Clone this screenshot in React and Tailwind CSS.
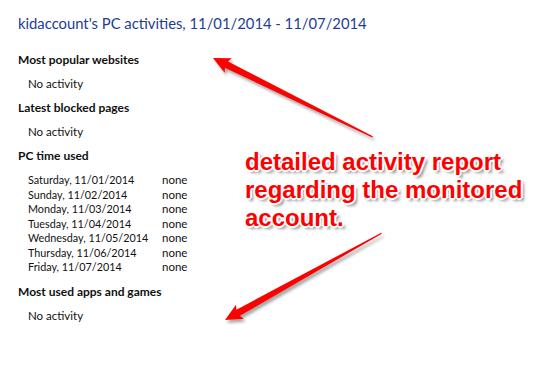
const days = [
  'Saturday, 11/01/2014',
  'Sunday, 11/02/2014',
  'Monday, 11/03/2014',
  'Tuesday, 11/04/2014',
  'Wednesday, 11/05/2014',
  'Thursday, 11/06/2014',
  'Friday, 11/07/2014',
];

function Section({ title, children }) {
  return (
    <section>
      <h2 className="text-[12px] font-bold leading-[24px]">{title}</h2>
      {children}
    </section>
  );
}

function NoActivity() {
  return <p className="pl-[10px] text-[11.5px] leading-[24px]">No activity</p>;
}

function Arrow({ x, y, angle, length }) {
  return (
    <g transform={`translate(${x} ${y}) rotate(${angle})`}>
      <polygon
        points={`0,0 17,-8 15,-3.5 ${length},-0.6 ${length},0.6 15,3.5 17,8`}
        fill="#ff0000"
      />
    </g>
  );
}

export default function App() {
  return (
    <div className="relative h-[367px] w-[550px] overflow-hidden bg-white font-['Lato',sans-serif] text-[#111]">
      <div className="pl-[18px] pt-[11px]">
        <h1 className="mb-[13px] whitespace-nowrap text-[14.8px] leading-[24px] text-[#1c3c96]">
          kidaccount's PC activities, 11/01/2014 - 11/07/2014
        </h1>
        <Section title="Most popular websites">
          <NoActivity />
        </Section>
        <Section title="Latest blocked pages">
          <NoActivity />
        </Section>
        <Section title="PC time used">
          <ul className="mb-[5px] mt-[5px] pl-[10px] text-[10.8px] leading-[14.5px]">
            {days.map((d) => (
              <li key={d} className="flex whitespace-nowrap">
                <span className="w-[134px] shrink-0">{d}</span>
                <span className="text-[11.5px]">none</span>
              </li>
            ))}
          </ul>
        </Section>
        <Section title="Most used apps and games">
          <NoActivity />
        </Section>
      </div>

      <svg
        className="pointer-events-none absolute left-0 top-0 drop-shadow-[2px_3px_1.5px_rgba(0,0,0,0.35)]"
        width="550"
        height="367"
      >
        <Arrow x={213} y={58} angle={26.3} length={178} />
        <Arrow x={225} y={320} angle={-29} length={179} />
      </svg>

      <p className="absolute left-[245px] top-[148px] font-['Liberation_Sans',Arial,sans-serif] text-[24px] font-bold leading-[28px] text-[#ff0000] [text-shadow:-1px_-1px_0_#fff,1px_-1px_0_#fff,-1px_1px_0_#fff,1px_1px_0_#fff,0_-2px_0_#fff,0_2px_0_#fff,-2px_0_0_#fff,2px_0_0_#fff,3px_3px_3px_rgba(0,0,0,0.45)]">
        detailed activity report
        <br />
        regarding the monitored
        <br />
        account.
      </p>
    </div>
  );
}
